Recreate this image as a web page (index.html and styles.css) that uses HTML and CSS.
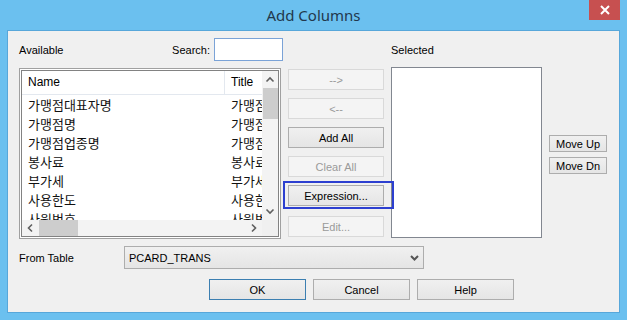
FILE: index.html
```html
<!DOCTYPE html>
<html lang="ko">
<head>
    <meta charset="UTF-8">
    <link rel="stylesheet" href="styles.css">
</head>
<body>
    <div class="janela">
        <div class="barraTitulo">
            <span></span>
            <div class="titulo">Add Columns</div>
            <div class="fechar">
                <svg width="10" height="10" viewBox="0 0 10 10"><path d="M1 1L9 9M9 1L1 9" stroke="#fff" stroke-width="2"/></svg>
            </div>
        </div>

        <div class="dialogo">
            <div class="grade">
                <div class="cabecalho">
                    <span>Available</span>
                    <span class="busca">Search: <input type="text" class="campoBusca"></span>
                </div>
                <div></div>
                <div class="cabecalho"><span>Selected</span></div>
                <div></div>

                <!-- lista de colunas disponiveis -->
                <div class="listaDisp">
                    <div class="listaInterna">
                        <div class="conteudo">
                            <div class="linhaCab">
                                <div class="colNome">Name</div>
                                <div class="colTitulo">Title</div>
                            </div>
                            <div class="linha"><div class="colNome">가맹점대표자명</div><div class="colTitulo">가맹점대표자명</div></div>
                            <div class="linha"><div class="colNome">가맹점명</div><div class="colTitulo">가맹점명</div></div>
                            <div class="linha"><div class="colNome">가맹점업종명</div><div class="colTitulo">가맹점업종명</div></div>
                            <div class="linha"><div class="colNome">봉사료</div><div class="colTitulo">봉사료</div></div>
                            <div class="linha"><div class="colNome">부가세</div><div class="colTitulo">부가세</div></div>
                            <div class="linha"><div class="colNome">사용한도</div><div class="colTitulo">사용한도</div></div>
                            <div class="linha"><div class="colNome">사원번호</div><div class="colTitulo">사원번호</div></div>
                        </div>
                        <div class="rolagemV">
                            <svg class="seta" width="16" height="17" viewBox="0 0 16 17"><path d="M4.5 10.5L8 7L11.5 10.5" fill="none" stroke="#606060" stroke-width="1.6"/></svg>
                            <div class="polegarV"></div>
                            <div class="trilho"></div>
                            <svg class="seta" width="16" height="17" viewBox="0 0 16 17"><path d="M4.5 6.5L8 10L11.5 6.5" fill="none" stroke="#606060" stroke-width="1.6"/></svg>
                        </div>
                        <div class="rolagemH">
                            <svg class="seta" width="17" height="16" viewBox="0 0 17 16"><path d="M10 4.5L6.5 8L10 11.5" fill="none" stroke="#606060" stroke-width="1.6"/></svg>
                            <div class="polegarH"></div>
                            <div class="trilho"></div>
                            <svg class="seta" width="17" height="16" viewBox="0 0 17 16"><path d="M7 4.5L10.5 8L7 11.5" fill="none" stroke="#606060" stroke-width="1.6"/></svg>
                        </div>
                        <div class="canto"></div>
                    </div>
                </div>

                <div class="botoesMeio">
                    <button class="botao desativado">--&gt;</button>
                    <button class="botao desativado">&lt;--</button>
                    <button class="botao">Add All</button>
                    <button class="botao desativado">Clear All</button>
                    <div class="foco"><button class="botao">Expression...</button></div>
                    <button class="botao desativado">Edit...</button>
                </div>

                <div class="listaSel"></div>

                <div class="botoesMover">
                    <button class="botao botaoPequeno">Move Up</button>
                    <button class="botao botaoPequeno">Move Dn</button>
                </div>
            </div>

            <div class="linhaTabela">
                <span class="rotuloTabela">From Table</span>
                <div class="combo">
                    <span>PCARD_TRANS</span>
                    <svg width="9" height="6" viewBox="0 0 9 6"><path d="M1 1L4.5 4.5L8 1" fill="none" stroke="#555" stroke-width="2"/></svg>
                </div>
            </div>

            <div class="rodape">
                <button class="botao botaoOk">OK</button>
                <button class="botao">Cancel</button>
                <button class="botao">Help</button>
            </div>
        </div>
    </div>
</body>
</html>
```

FILE: styles.css
```css
body {
    margin: 0;
    width: 627px;
    height: 320px;
    overflow: hidden;
    background-color: #6bc0ef;
    font-family: "Liberation Sans", Arial, sans-serif;
    font-size: 11px;
    color: #000;
}

.janela {
    padding: 0 7px 7px 7px;
}

.barraTitulo {
    height: 30px;
    display: grid;
    grid-template-columns: 1fr auto 1fr;
    align-items: start;
}

.titulo {
    font-family: "Noto Sans", sans-serif;
    font-size: 15px;
    line-height: 30px;
    color: #22384c;
}

.fechar {
    justify-self: end;
    width: 31px;
    height: 20px;
    background-color: #c75050;
    display: flex;
    align-items: center;
    justify-content: center;
}

.dialogo {
    box-sizing: border-box;
    height: 283px;
    border: 1px solid #57a7da;
    background-color: #f0f0f0;
    padding: 7px 0 0 11px;
}

.grade {
    display: grid;
    grid-template-columns: 262px 96px 151px 58px;
    grid-template-rows: 23px 171px;
    column-gap: 7px;
    row-gap: 6px;
}

.cabecalho {
    display: flex;
    align-items: center;
    justify-content: space-between;
}

.busca {
    display: flex;
    align-items: center;
    gap: 4px;
    margin-right: -2px;
}

.campoBusca {
    box-sizing: border-box;
    width: 69px;
    height: 23px;
    margin: 0;
    border: 1px solid #7ba3d7;
    background-color: #fff;
    outline: none;
}

.listaDisp {
    box-sizing: border-box;
    height: 171px;
    margin-top: 1px;
    border: 1px solid #a0a0a0;
    padding: 1px;
    background-color: #fff;
}

.listaInterna {
    height: 100%;
    box-sizing: border-box;
    border: 1px solid #828282;
    display: grid;
    grid-template-columns: 1fr 16px;
    grid-template-rows: 1fr 16px;
    overflow: hidden;
}

.conteudo {
    overflow: hidden;
    background-color: #fff;
    min-width: 0;
}

.linhaCab {
    display: grid;
    grid-template-columns: 203px 100px;
    height: 23px;
    border-bottom: 1px solid #e3e8ef;
    font-size: 12px;
    line-height: 23px;
    white-space: nowrap;
}

.linhaCab .colNome {
    border-right: 1px solid #e3e8ef;
}

.linha {
    display: grid;
    grid-template-columns: 203px 100px;
    height: 19px;
    line-height: 19px;
    font-family: "Noto Sans CJK KR", sans-serif;
    font-size: 13px;
    color: #111;
    white-space: nowrap;
}

.colNome {
    padding-left: 6px;
    overflow: hidden;
}

.colTitulo {
    padding-left: 6px;
    overflow: hidden;
}

.rolagemV {
    display: flex;
    flex-direction: column;
    background-color: #f3f3f3;
}

.polegarV {
    height: 31px;
    margin-left: 1px;
    background-color: #cdcdcd;
}

.rolagemH {
    display: flex;
    background-color: #f3f3f3;
}

.polegarH {
    width: 39px;
    background-color: #cdcdcd;
}

.trilho {
    flex: 1;
}

.seta {
    flex: none;
    display: block;
}

.canto {
    background-color: #f0f0f0;
}

.botao {
    box-sizing: border-box;
    height: 21px;
    margin: 0;
    padding: 0;
    border: 1px solid #adadad;
    background: linear-gradient(#f0f0f0, #e5e5e5);
    font-family: "Liberation Sans", Arial, sans-serif;
    font-size: 11px;
    color: #000;
}

.botao.desativado {
    border-color: #d9d9d9;
    background: #f4f4f4;
    color: #9a9a9a;
}

.botoesMeio {
    display: flex;
    flex-direction: column;
    gap: 8px;
    padding-top: 2px;
}

.botoesMeio .botao {
    width: 96px;
}

.foco {
    position: relative;
    margin: -4px -10px -1px -5px;
    padding: 2px 8px 1px 3px;
    border: 2px solid #2c3fd0;
}

.listaSel {
    box-sizing: border-box;
    height: 171px;
    border: 1px solid #828790;
    background-color: #fff;
}

.botoesMover {
    align-self: center;
    margin-top: 4px;
    display: flex;
    flex-direction: column;
    gap: 5px;
}

.botaoPequeno {
    width: 58px;
    height: 17px;
}

.linhaTabela {
    display: flex;
    align-items: center;
    margin-top: 8px;
}

.rotuloTabela {
    width: 105px;
}

.combo {
    box-sizing: border-box;
    width: 300px;
    height: 23px;
    border: 1px solid #adadad;
    background: linear-gradient(#f0f0f0, #e5e5e5);
    display: flex;
    align-items: center;
    justify-content: space-between;
    padding: 0 4px 0 4px;
}

.rodape {
    display: flex;
    gap: 7px;
    margin-top: 10px;
    padding-left: 190px;
}

.rodape .botao {
    width: 97px;
}

.botaoOk {
    border-color: #3c7fb1;
}
```
